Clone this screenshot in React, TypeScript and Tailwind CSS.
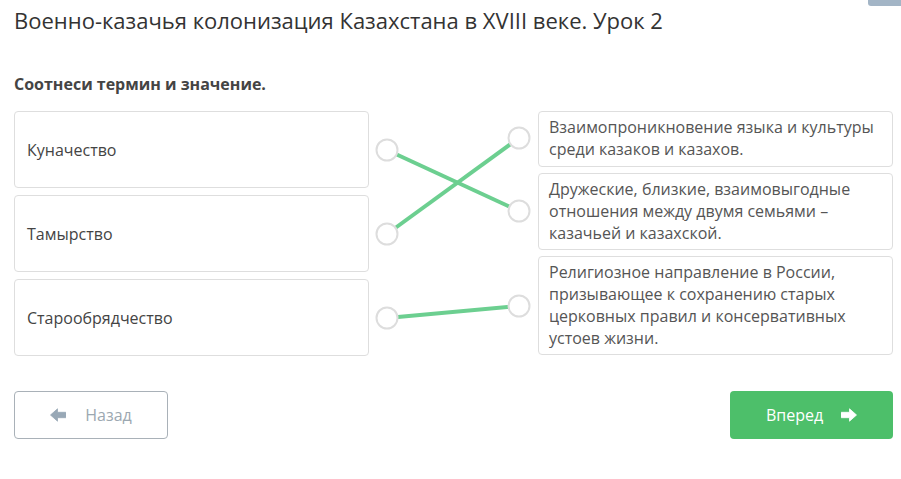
const terms = ["Куначество", "Тамырство", "Старообрядчество"];

const meanings = [
  { text: "Взаимопроникновение языка и культуры среди казаков и казахов.", h: "h-[56px]" },
  { text: "Дружеские, близкие, взаимовыгодные отношения между двумя семьями – казачьей и казахской.", h: "h-[77px]" },
  { text: "Религиозное направление в России, призывающее к сохранению старых церковных правил и консервативных устоев жизни.", h: "h-[99px]" },
];

// left circle centers / right circle centers, relative to the connector area
const leftY = [39, 123, 207];
const rightY = [27, 100, 195];
const links: [number, number][] = [
  [0, 1],
  [1, 0],
  [2, 2],
];

function Connectors() {
  return (
    <svg width="169" height="245" viewBox="0 0 169 245" className="shrink-0">
      {links.map(([l, r], i) => (
        <line
          key={i}
          x1={18}
          y1={leftY[l]}
          x2={150}
          y2={rightY[r]}
          stroke="#6ccf90"
          strokeWidth={4}
        />
      ))}
      {leftY.map((y) => (
        <circle key={"l" + y} cx={18} cy={y} r={10.5} fill="white" stroke="#dddddd" strokeWidth={2} />
      ))}
      {rightY.map((y) => (
        <circle key={"r" + y} cx={150} cy={y} r={10.5} fill="white" stroke="#dddddd" strokeWidth={2} />
      ))}
    </svg>
  );
}

function Arrow({ flip, color }: { flip?: boolean; color: string }) {
  return (
    <svg width="16" height="14" viewBox="0 0 16 14" className={flip ? "-scale-x-100" : ""}>
      <path
        d="M0.5 7 L7.5 0.8 L7.5 4.3 L15.5 4.3 Q16 4.3 16 5 L16 9 Q16 9.7 15.5 9.7 L7.5 9.7 L7.5 13.2 Z"
        fill={color}
        stroke={color}
        strokeWidth={0.8}
        strokeLinejoin="round"
      />
    </svg>
  );
}

export default function App() {
  return (
    <div className="relative w-[901px] h-[479px] bg-white overflow-hidden font-['Open_Sans',sans-serif] text-[#333]">
      <div className="absolute right-0 top-0 w-[33px] h-[6px] bg-[#a3b5c6] rounded-bl-[3px]" />
      <div className="px-[14px]">
        <h1 className="pt-[5px] text-[22px] leading-[30px] font-normal text-[#333]">
          Военно-казачья колонизация Казахстана в XVIII веке. Урок 2
        </h1>
        <p className="mt-[38px] text-[16px] leading-[22px] font-bold text-[#444]">
          Соотнеси термин и значение.
        </p>
        <div className="mt-[16px] flex items-start">
          <div className="flex flex-col gap-[7px] w-[355px] shrink-0">
            {terms.map((t) => (
              <div
                key={t}
                className="h-[77px] flex items-center px-[12px] border border-[#dedede] rounded-[4px] text-[16px] text-[#444]"
              >
                {t}
              </div>
            ))}
          </div>
          <Connectors />
          <div className="flex flex-col gap-[6px] w-[355px] shrink-0">
            {meanings.map((m) => (
              <div
                key={m.text}
                className={`${m.h} px-[10px] pt-[4px] border border-[#dedede] rounded-[4px] text-[16px] leading-[22px] text-[#555]`}
              >
                {m.text}
              </div>
            ))}
          </div>
        </div>
        <div className="mt-[35px] flex justify-between w-[879px]">
          <button className="w-[154px] h-[48px] flex items-center justify-center gap-[19px] border border-[#a9b1b8] rounded-[4px] text-[16px] text-[#9ca8b1] bg-white">
            <Arrow color="#98a8b6" />
            <span>Назад</span>
          </button>
          <button className="w-[163px] h-[48px] flex items-center justify-center gap-[18px] rounded-[4px] bg-[#4dbf6a] text-[16px] text-white">
            <span>Вперед</span>
            <Arrow flip color="#ffffff" />
          </button>
        </div>
      </div>
    </div>
  );
}
